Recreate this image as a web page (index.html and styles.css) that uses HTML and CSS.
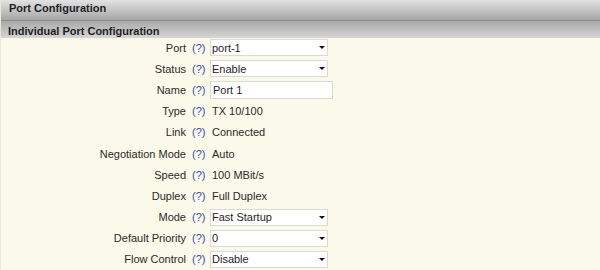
FILE: index.html
```html
<!DOCTYPE html>
<html>

<head>
    <title>Port Configuration</title>
    <link rel="stylesheet" href="styles.css">
</head>

<body>
    <div class="panel">
        <div class="title">Port Configuration</div>
        <div class="subtitle">Individual Port Configuration</div>

        <form class="form">
            <label class="label" for="port">Port</label>
            <a class="help" href="#">(?)</a>
            <span class="drop">
                <select id="port" name="port">
                    <option>port-1</option>
                    <option>port-2</option>
                </select>
            </span>

            <label class="label" for="status">Status</label>
            <a class="help" href="#">(?)</a>
            <span class="drop">
                <select id="status" name="status">
                    <option>Enable</option>
                    <option>Disable</option>
                </select>
            </span>

            <label class="label" for="name">Name</label>
            <a class="help" href="#">(?)</a>
            <span><input class="text-input" type="text" id="name" name="name" value="Port 1"></span>

            <span class="label">Type</span>
            <a class="help" href="#">(?)</a>
            <span class="value">TX 10/100</span>

            <span class="label">Link</span>
            <a class="help" href="#">(?)</a>
            <span class="value">Connected</span>

            <span class="label">Negotiation Mode</span>
            <a class="help" href="#">(?)</a>
            <span class="value">Auto</span>

            <span class="label">Speed</span>
            <a class="help" href="#">(?)</a>
            <span class="value">100 MBit/s</span>

            <span class="label">Duplex</span>
            <a class="help" href="#">(?)</a>
            <span class="value">Full Duplex</span>

            <label class="label" for="mode">Mode</label>
            <a class="help" href="#">(?)</a>
            <span class="drop">
                <select id="mode" name="mode">
                    <option>Fast Startup</option>
                    <option>Normal</option>
                </select>
            </span>

            <label class="label" for="priority">Default Priority</label>
            <a class="help" href="#">(?)</a>
            <span class="drop">
                <select id="priority" name="priority">
                    <option>0</option>
                    <option>1</option>
                </select>
            </span>

            <label class="label" for="flow">Flow Control</label>
            <a class="help" href="#">(?)</a>
            <span class="drop">
                <select id="flow" name="flow">
                    <option>Disable</option>
                    <option>Enable</option>
                </select>
            </span>
        </form>
    </div>
</body>

</html>
```

FILE: styles.css
```css
body {
    margin: 0;
    font-family: "Liberation Sans", Arial, sans-serif;
    font-size: 11px;
    color: #2a2a2a;
    background-color: #fbf9e9;
}

.panel {
    border-left: 1px solid #ebe9d8;
}

.title {
    height: 20px;
    line-height: 17px;
    padding-left: 8px;
    font-weight: bold;
    color: #1e1e1e;
    background: linear-gradient(#e2e2e2, #a6a6a6);
    border-bottom: 1px solid #8c8c8c;
}

.subtitle {
    height: 17px;
    line-height: 21px;
    padding-left: 7px;
    font-weight: bold;
    color: #1e1e1e;
    background: linear-gradient(#a9a9a9, #d6d6d6);
}

.form {
    display: grid;
    grid-template-columns: 185px 24px 1fr;
    grid-auto-rows: 21.2px;
    align-items: center;
    margin: -1px 0 0;
}

.label {
    text-align: right;
}

.help {
    color: #3b4cb0;
    text-decoration: none;
    padding-left: 6px;
}

.value {
    padding-left: 2px;
}

.drop {
    position: relative;
    display: block;
    width: 118px;
}

.drop select {
    appearance: none;
    -webkit-appearance: none;
    display: block;
    width: 118px;
    height: 17px;
    margin: 0;
    padding: 0 0 0 1px;
    font-family: "Liberation Sans", Arial, sans-serif;
    font-size: 11px;
    color: #1e1e1e;
    background-color: #fff;
    border: 1px solid #dad9d2;
    border-radius: 0;
}

.drop::after {
    content: '';
    position: absolute;
    right: 3px;
    top: 7px;
    border-left: 3px solid transparent;
    border-right: 3px solid transparent;
    border-top: 3px solid #111;
    pointer-events: none;
}

.text-input {
    display: block;
    box-sizing: border-box;
    width: 123px;
    height: 18px;
    margin: 0;
    padding: 0 0 0 2px;
    font-family: "Liberation Sans", Arial, sans-serif;
    font-size: 11px;
    color: #1e1e1e;
    background-color: #fff;
    border: 1px solid #dad9d2;
}
```
